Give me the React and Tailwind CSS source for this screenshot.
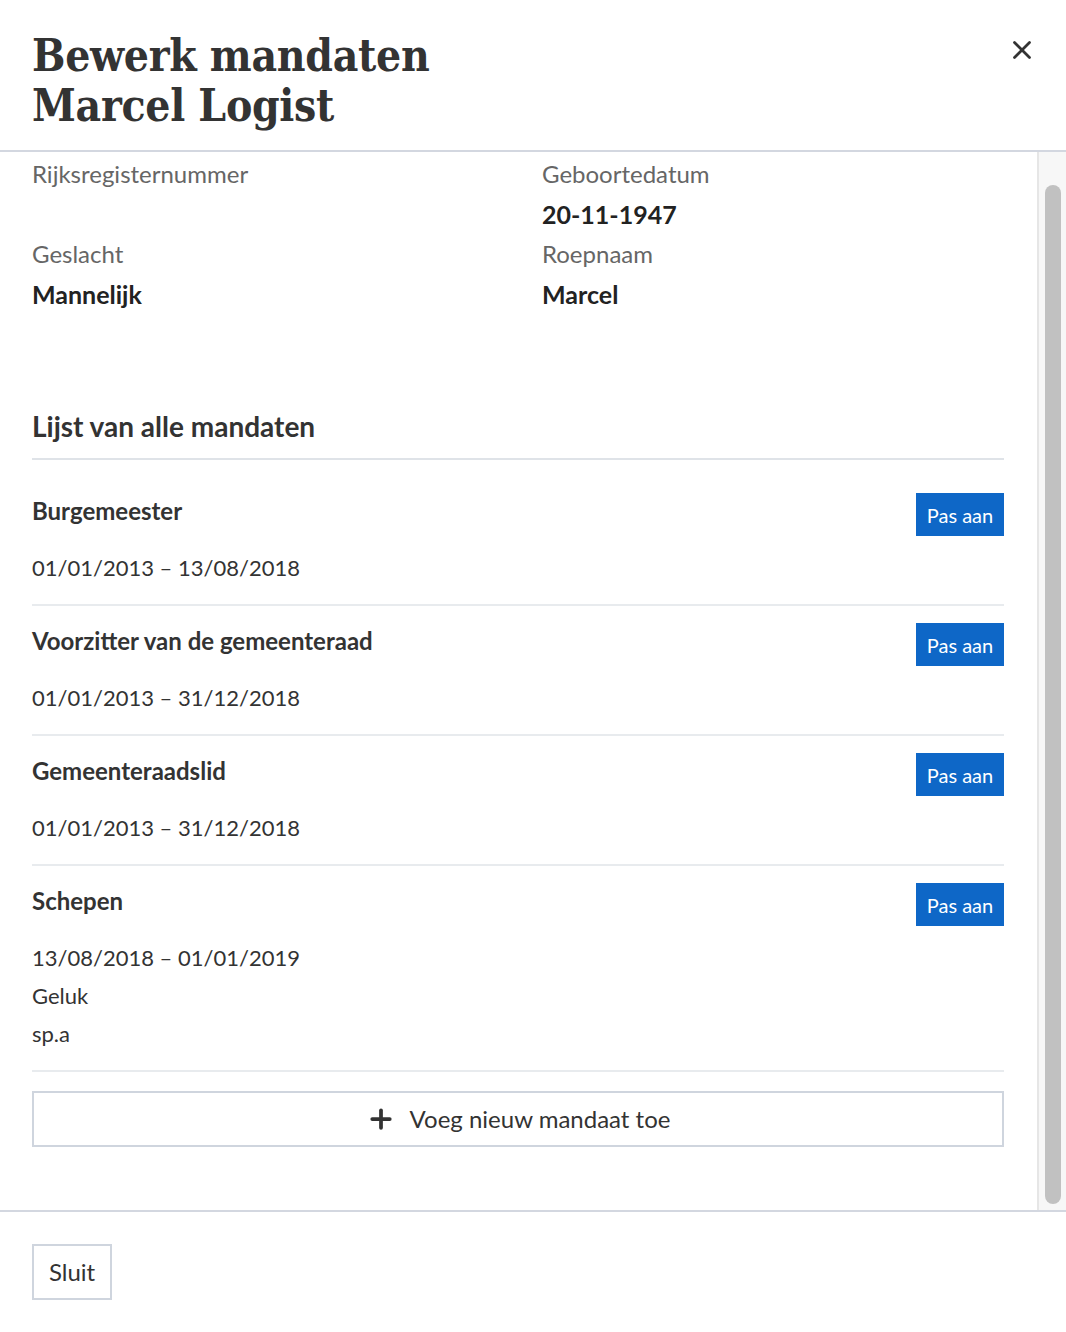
import { X, Plus } from 'lucide-react'

const sans = "font-['Lato','Noto_Sans',sans-serif]"

const mandaten = [
  { title: 'Burgemeester', lines: ['01/01/2013 – 13/08/2018'] },
  { title: 'Voorzitter van de gemeenteraad', lines: ['01/01/2013 – 31/12/2018'] },
  { title: 'Gemeenteraadslid', lines: ['01/01/2013 – 31/12/2018'] },
  { title: 'Schepen', lines: ['13/08/2018 – 01/01/2019', 'Geluk', 'sp.a'] },
]

function Field({ label, value }) {
  return (
    <div>
      <div className="h-10 leading-10 text-[24px] text-[#666]">{label}</div>
      <div className="h-10 leading-10 text-[25px] font-bold text-[#222]">{value}</div>
    </div>
  )
}

export default function App() {
  return (
    <div className={`${sans} w-[1066px] h-[1332px] bg-white text-[#333] flex flex-col`}>
      <header className="h-[152px] shrink-0 border-b-2 border-[#d3d7e0] flex justify-between pl-8 pr-8 pt-[31px]">
        <h1 className="font-['DejaVu_Serif',serif] [font-stretch:condensed] font-bold text-[44px] leading-[50px] tracking-[-0.3px] text-[#333]">
          Bewerk mandaten
          <br />
          Marcel Logist
        </h1>
        <button type="button" className="mt-[4px] mr-[-3px] h-[30px] w-[30px] flex items-center justify-center text-[#333]">
          <X size={30} strokeWidth={2.2} />
        </button>
      </header>

      <div className="flex flex-1 min-h-0">
        <div className="flex-1 pl-8 pr-[33px] pt-[2px]">
          <div className="grid grid-cols-[510px_1fr]">
            <Field label="Rijksregisternummer" value="" />
            <Field label="Geboortedatum" value="20-11-1947" />
            <Field label="Geslacht" value="Mannelijk" />
            <Field label="Roepnaam" value="Marcel" />
          </div>

          <h2 className="mt-[94px] pb-[14px] border-b-2 border-[#dfe3e8] text-[28px] leading-[36px] font-bold text-[#333]">
            Lijst van alle mandaten
          </h2>

          <div className="mt-[16px]">
            {mandaten.map((m) => (
              <div key={m.title} className="flex justify-between items-start pt-[16px] pb-[17px] border-b-2 border-[#e8ebee]">
                <div>
                  <div className="h-[37px] leading-[37px] text-[24px] font-bold text-[#333]">{m.title}</div>
                  <div className="mt-[20px]">
                    {m.lines.map((l) => (
                      <div key={l} className="h-[38px] leading-[38px] text-[22px] text-[#333]">{l}</div>
                    ))}
                  </div>
                </div>
                <button type="button" className="mt-[1px] h-[43px] w-[88px] bg-[#0e67c7] text-white text-[20px] leading-none">
                  Pas aan
                </button>
              </div>
            ))}
          </div>

          <button
            type="button"
            className="mt-[19px] w-full h-[56px] border-2 border-[#cfd5de] flex items-center justify-center gap-[14px] text-[24px] text-[#333]"
          >
            <Plus size={30} strokeWidth={3} />
            Voeg nieuw mandaat toe
          </button>
        </div>

        <div className="w-[29px] shrink-0 bg-[#f7f7f7] border-l-2 border-[#e6e6e6] pt-[33px] pb-[6px] flex justify-center">
          <div className="w-[16px] h-full rounded-full bg-[#c1c1c1]" />
        </div>
      </div>

      <footer className="h-[122px] shrink-0 border-t-2 border-[#d3d7e0] pl-8 pt-[32px]">
        <button type="button" className="h-[56px] px-[15px] border-2 border-[#cfd5de] text-[24px] text-[#333]">
          Sluit
        </button>
      </footer>
    </div>
  )
}
